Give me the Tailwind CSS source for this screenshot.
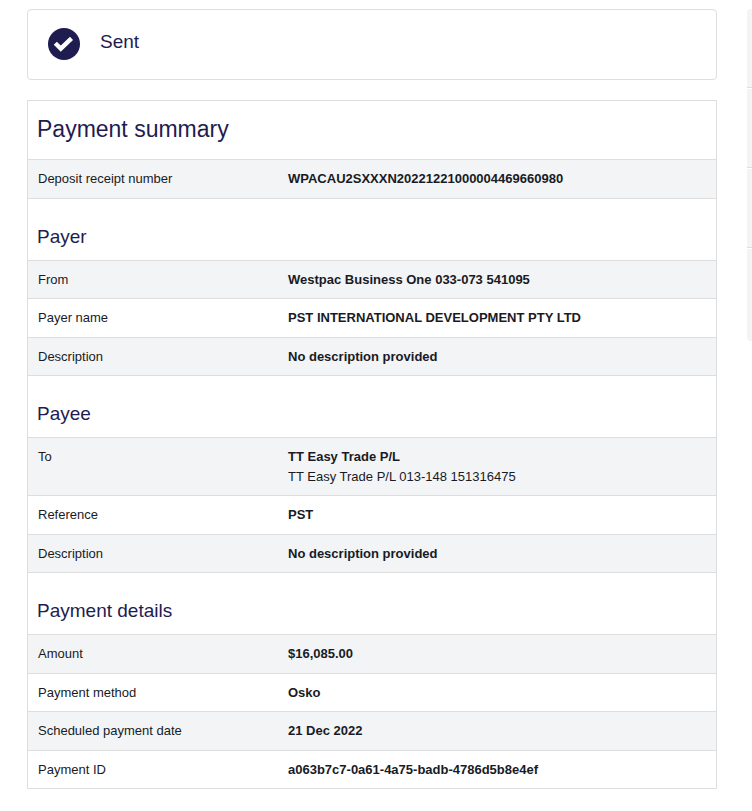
<!DOCTYPE html>
<html lang="en">
<head>
<meta charset="utf-8">
<meta name="viewport" content="width=device-width, initial-scale=1">
<title>Payment summary</title>
<script src="https://cdn.jsdelivr.net/npm/@tailwindcss/browser@4"></script>
</head>
<body class="bg-white font-['Liberation_Sans',Arial,sans-serif] text-[13px] leading-5 text-[#181b25]">
<div class="flex items-start gap-[30px] pt-[9px] pl-[27px] pb-5">
  <main class="min-w-0 flex-1">
    <div class="flex gap-5 rounded border border-[#dedede] px-5 pt-[18px] pb-[19px]" role="status">
      <svg class="size-8 shrink-0" viewBox="0 0 32 32" aria-hidden="true">
        <circle cx="16" cy="16" r="16" fill="#1f1c4f"/>
        <path d="M7.3 15.2 L12.8 20.6 L23.5 10.4" fill="none" stroke="#fff" stroke-width="4.4" stroke-linecap="butt" stroke-linejoin="miter"/>
      </svg>
      <p class="text-[19px] leading-7 text-[#1f1c4f]">Sent</p>
    </div>

    <article class="mt-5 border border-[#dedede]">
      <h1 class="px-[9px] pt-[14px] pb-4 text-[23px] leading-7 text-[#1f1c4f]">Payment summary</h1>
      <table class="w-full table-fixed border-separate border-spacing-0 text-left">
        <colgroup><col class="w-[250px]"><col></colgroup>
        <tbody class="align-top [&_td]:border-t [&_td]:border-[#dedede] [&_td]:px-[10px] [&_td]:pt-[9px] [&_td]:pb-[9px] [&_th]:border-t [&_th]:border-[#dedede] [&_th]:px-[10px] [&_th]:pt-[9px] [&_th]:pb-2 [&_th]:font-normal [&_tr:nth-child(odd)]:bg-[#f3f4f6]">
          <tr><th scope="row">Deposit receipt number</th><td><strong>WPACAU2SXXXN20221221000004469660980</strong></td></tr>
        </tbody>
      </table>

      <h2 class="border-t border-[#dedede] px-[9px] pt-6 pb-[9px] text-[19px] leading-7 text-[#1f1c4f]">Payer</h2>
      <table class="w-full table-fixed border-separate border-spacing-0 text-left">
        <colgroup><col class="w-[250px]"><col></colgroup>
        <tbody class="align-top [&_td]:border-t [&_td]:border-[#dedede] [&_td]:px-[10px] [&_td]:pt-[9px] [&_td]:pb-2 [&_th]:border-t [&_th]:border-[#dedede] [&_th]:px-[10px] [&_th]:pt-[9px] [&_th]:pb-2 [&_th]:font-normal [&_tr:nth-child(odd)]:bg-[#f3f4f6] [&_tr:nth-child(even)_td]:pb-[9px]">
          <tr><th scope="row">From</th><td><strong>Westpac Business One 033-073 541095</strong></td></tr>
          <tr><th scope="row">Payer name</th><td><strong>PST INTERNATIONAL DEVELOPMENT PTY LTD</strong></td></tr>
          <tr><th scope="row">Description</th><td><strong>No description provided</strong></td></tr>
        </tbody>
      </table>

      <h2 class="border-t border-[#dedede] px-[9px] pt-6 pb-[9px] text-[19px] leading-7 text-[#1f1c4f]">Payee</h2>
      <table class="w-full table-fixed border-separate border-spacing-0 text-left">
        <colgroup><col class="w-[250px]"><col></colgroup>
        <tbody class="align-top [&_td]:border-t [&_td]:border-[#dedede] [&_td]:px-[10px] [&_td]:pt-[9px] [&_td]:pb-2 [&_th]:border-t [&_th]:border-[#dedede] [&_th]:px-[10px] [&_th]:pt-[9px] [&_th]:pb-2 [&_th]:font-normal [&_tr:nth-child(odd)]:bg-[#f3f4f6] [&_tr:nth-child(even)_td]:pb-[9px]">
          <tr><th scope="row">To</th><td><strong>TT Easy Trade P/L</strong><br>TT Easy Trade P/L 013-148 151316475</td></tr>
          <tr><th scope="row">Reference</th><td><strong>PST</strong></td></tr>
          <tr><th scope="row">Description</th><td><strong>No description provided</strong></td></tr>
        </tbody>
      </table>

      <h2 class="border-t border-[#dedede] px-[9px] pt-6 pb-[9px] text-[19px] leading-7 text-[#1f1c4f]">Payment details</h2>
      <table class="w-full table-fixed border-separate border-spacing-0 text-left">
        <colgroup><col class="w-[250px]"><col></colgroup>
        <tbody class="align-top [&_td]:border-t [&_td]:border-[#dedede] [&_td]:px-[10px] [&_td]:pt-[9px] [&_td]:pb-2 [&_th]:border-t [&_th]:border-[#dedede] [&_th]:px-[10px] [&_th]:pt-[9px] [&_th]:pb-2 [&_th]:font-normal [&_tr:nth-child(odd)]:bg-[#f3f4f6] [&_tr:nth-child(odd)_td]:pb-[9px]">
          <tr><th scope="row">Amount</th><td><strong>$16,085.00</strong></td></tr>
          <tr><th scope="row">Payment method</th><td><strong>Osko</strong></td></tr>
          <tr><th scope="row">Scheduled payment date</th><td><strong>21 Dec 2022</strong></td></tr>
          <tr><th scope="row">Payment ID</th><td><strong>a063b7c7-0a61-4a75-badb-4786d5b8e4ef</strong></td></tr>
        </tbody>
      </table>
    </article>
  </main>

  <div class="flex w-[5px] shrink-0 flex-col gap-px overflow-hidden rounded-l" aria-hidden="true">
    <div class="h-[79px] border-b border-[#dedede] bg-[#f3f4f6]"></div>
    <div class="h-[79px] border-b border-[#dedede] bg-[#f3f4f6]"></div>
    <div class="h-[79px] border-b border-[#dedede] bg-[#f3f4f6]"></div>
    <div class="h-[92px] bg-[#f3f4f6]"></div>
  </div>
</div>
</body>
</html>
